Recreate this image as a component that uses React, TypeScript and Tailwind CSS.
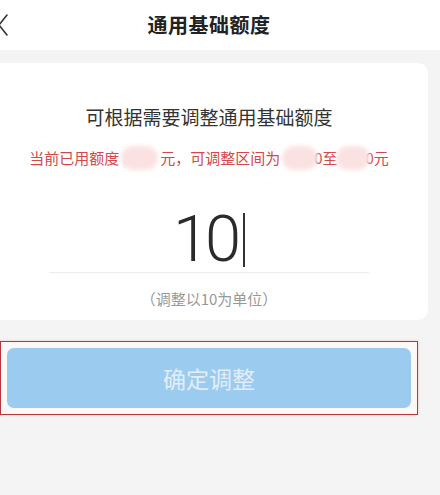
export default function App() {
  const cjk = { fontFamily: '"Noto Sans CJK SC", "Noto Sans", sans-serif' };

  return (
    <div className="w-[440px] h-[495px] overflow-hidden bg-[#f4f4f4]" style={cjk}>
      {/* header */}
      <header className="h-[50px] bg-white pr-[22px] grid grid-cols-[40px_1fr_40px] items-center">
        <svg className="-ml-[4px]" width="14" height="24" viewBox="0 0 14 24" fill="none">
          <path d="M11 2 L3 12 L11 22" stroke="#333" strokeWidth="1.6" strokeLinecap="round" strokeLinejoin="round" />
        </svg>
        <h1 className="text-center text-[20px] font-bold text-[#222] tracking-[0.5px]">通用基础额度</h1>
        <span />
      </header>

      <div className="w-[438px] -ml-[10px] mt-[13px]">
        {/* card */}
        <section className="bg-white rounded-[10px] pt-[40px] pb-[11px] flex flex-col items-center">
          <p className="text-[19px] leading-[28px] text-[#333]">可根据需要调整通用基础额度</p>
          <p className="mt-[15px] text-[15px] leading-[22px] text-[#d4474a] flex items-center whitespace-nowrap">
            <span>当前已用额度</span>
            <span className="inline-block w-[37px] h-[24px] mx-[2px] rounded-full bg-[#fbe2e2] blur-[2px]" />
            <span>元，可调整区间为</span>
            <span className="inline-block w-[36px] h-[24px] ml-[2px] -mr-[4px] rounded-full bg-[#fbe2e2] blur-[2px]" />
            <span>0至</span>
            <span className="inline-block w-[34px] h-[24px] -ml-[2px] -mr-[4px] rounded-full bg-[#fbe2e2] blur-[2px]" />
            <span>0元</span>
          </p>

          <div className="w-[320px] h-[103px] flex items-end justify-center border-b border-[#ececec]">
            <span
              className="text-[65px] leading-none font-light tracking-[-4px] text-[#2b2b2b]"
              style={{ fontFamily: 'Roboto, "Liberation Sans", sans-serif' }}
            >
              10
            </span>
            <span className="w-[2px] h-[54px] bg-[#333] ml-[6px] mb-[5px]" />
          </div>

          <p className="mt-[16px] text-[15px] leading-[20px] text-[#999]">（调整以10为单位）</p>
        </section>

        {/* button area */}
        <div className="mt-[21px] mx-[10px] p-[6px] border border-[#b8363a] bg-[#fdf8f8] shadow-[0_0_3px_#f5c6c6]">
          <button className="w-full h-[60px] rounded-[7px] bg-[#9ccbf0] text-[23px] text-[#e2edf8]">
            确定调整
          </button>
        </div>
      </div>
    </div>
  );
}
